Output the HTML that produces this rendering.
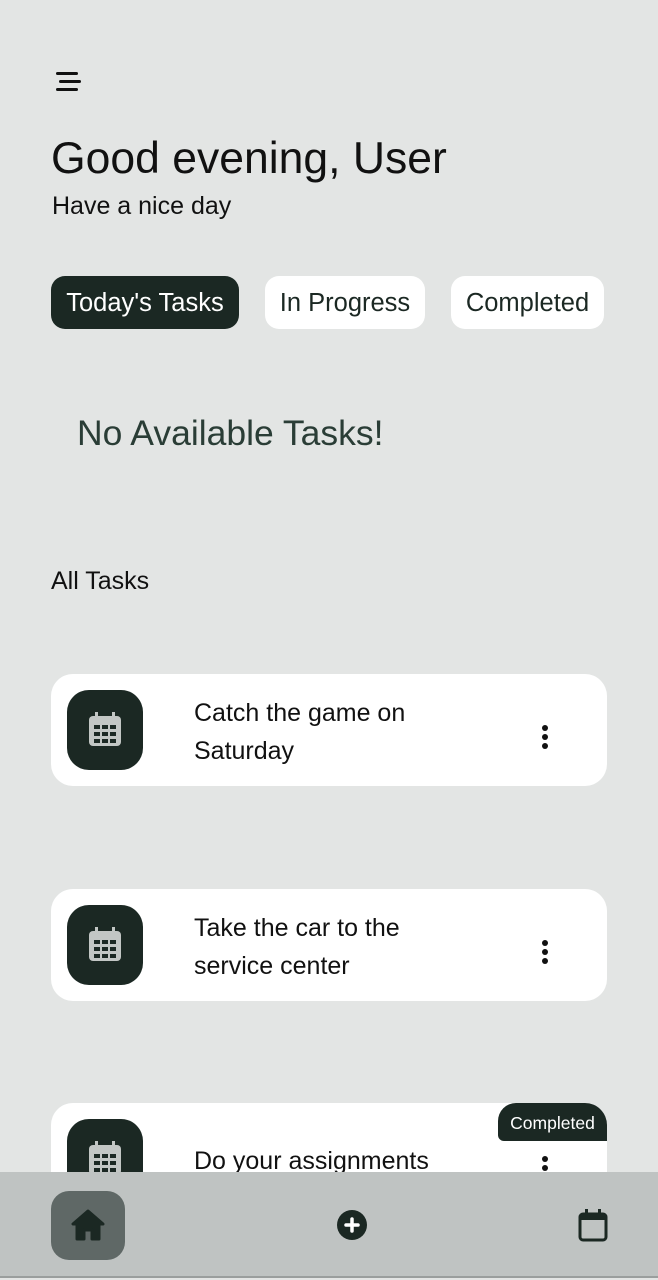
<!DOCTYPE html>
<html><head><meta charset="utf-8"><style>
*{margin:0;padding:0;box-sizing:border-box}
body{width:658px;height:1280px;background:#e3e5e4;font-family:"Liberation Sans",sans-serif;position:relative;overflow:hidden;color:#111}
.a{position:absolute}
.tab{position:absolute;top:276px;height:53px;border-radius:14px;background:#fff;font-size:25.5px;line-height:55px;text-align:center;color:#1b2823}
.card{position:absolute;left:51px;width:556px;height:112px;background:#fff;border-radius:22px;overflow:hidden}
.ic{position:absolute;left:16px;top:16px;width:76px;height:80px;border-radius:22px;background:#1b2823}
.ic svg{position:absolute;left:22px;top:22px}
.t{position:absolute;left:143px;top:20px;font-size:25px;line-height:38px;color:#111}
.dots{position:absolute;left:491px;top:51px;width:6px}
.dots i{display:block;width:6px;height:6px;border-radius:3px;background:#111;margin-bottom:3px}
</style></head><body>
<div class="a" style="left:56px;top:72px;width:22px;height:3px;background:#111;border-radius:2px"></div>
<div class="a" style="left:59px;top:80px;width:22px;height:3px;background:#111;border-radius:2px"></div>
<div class="a" style="left:56px;top:88px;width:22px;height:3px;background:#111;border-radius:2px"></div>
<div class="a" style="left:51px;top:132px;font-size:44.5px;line-height:54px">Good evening, User</div>
<div class="a" style="left:52px;top:191px;font-size:25px;line-height:30px">Have a nice day</div>
<div class="tab" style="left:51px;width:188px;background:#1b2823;color:#fff">Today's Tasks</div>
<div class="tab" style="left:265px;width:160px">In Progress</div>
<div class="tab" style="left:451px;width:153px">Completed</div>
<div class="a" style="left:77px;top:411px;font-size:35.5px;line-height:44px;color:#2a3d36">No Available Tasks!</div>
<div class="a" style="left:51px;top:566px;font-size:25px;line-height:30px">All Tasks</div>

<svg width="0" height="0" style="position:absolute"><defs><symbol id="cal" viewBox="0 0 32 36"><rect x="0" y="4" width="32" height="30" rx="4" fill="#c2c6c4"/><rect x="6" y="0" width="3" height="8" fill="#c2c6c4"/><rect x="23" y="0" width="3" height="8" fill="#c2c6c4"/><g fill="#1b2823"><rect x="5" y="13" width="6" height="4"/><rect x="13" y="13" width="6" height="4"/><rect x="21" y="13" width="6" height="4"/><rect x="5" y="20" width="6" height="4"/><rect x="13" y="20" width="6" height="4"/><rect x="21" y="20" width="6" height="4"/><rect x="5" y="27" width="6" height="4"/><rect x="13" y="27" width="6" height="4"/><rect x="21" y="27" width="6" height="4"/></g></symbol></defs></svg>

<div class="card" style="top:674px"><div class="ic"><svg width="32" height="36"><use href="#cal"/></svg></div><div class="t">Catch the game on<br>Saturday</div><div class="dots"><i></i><i></i><i></i></div></div>
<div class="card" style="top:889px"><div class="ic"><svg width="32" height="36"><use href="#cal"/></svg></div><div class="t">Take the car to the<br>service center</div><div class="dots"><i></i><i></i><i></i></div></div>
<div class="card" style="top:1103px"><div class="ic"><svg width="32" height="36"><use href="#cal"/></svg></div><div class="t" style="top:39px">Do your assignments</div><div class="dots" style="top:53px"><i></i><i></i><i></i></div>
<div class="a" style="left:447px;top:0;width:109px;height:38px;background:#1b2823;color:#fff;font-size:17.5px;line-height:40px;text-align:center;border-radius:18px 0 0 6px">Completed</div></div>

<div class="a" style="left:0;top:1172px;width:658px;height:106px;background:#bfc3c2;border-bottom:2px solid #9a9e9d"></div>
<div class="a" style="left:51px;top:1191px;width:74px;height:69px;border-radius:18px;background:#5f6866"></div>
<svg class="a" style="left:70px;top:1208px" width="36" height="34" viewBox="0 0 36 34"><path d="M18 3 L3 16 H7 V31 H14 V22 H22 V31 H29 V16 H33 Z" fill="#1b2823" stroke="#1b2823" stroke-width="3" stroke-linejoin="round"/></svg>
<svg class="a" style="left:336px;top:1209px" width="32" height="32" viewBox="0 0 32 32"><circle cx="16" cy="16" r="15" fill="#1b2823"/><path d="M16 10V22M10 16H22" stroke="#fff" stroke-width="3.5" stroke-linecap="round"/></svg>
<svg class="a" style="left:578px;top:1208px" width="30" height="34" viewBox="0 0 30 34"><rect x="2" y="6" width="26" height="26" rx="3" fill="none" stroke="#1b2823" stroke-width="3"/><rect x="2" y="6" width="26" height="6" fill="#1b2823"/><rect x="7" y="1" width="3" height="7" fill="#1b2823"/><rect x="20" y="1" width="3" height="7" fill="#1b2823"/></svg>
</body></html>
